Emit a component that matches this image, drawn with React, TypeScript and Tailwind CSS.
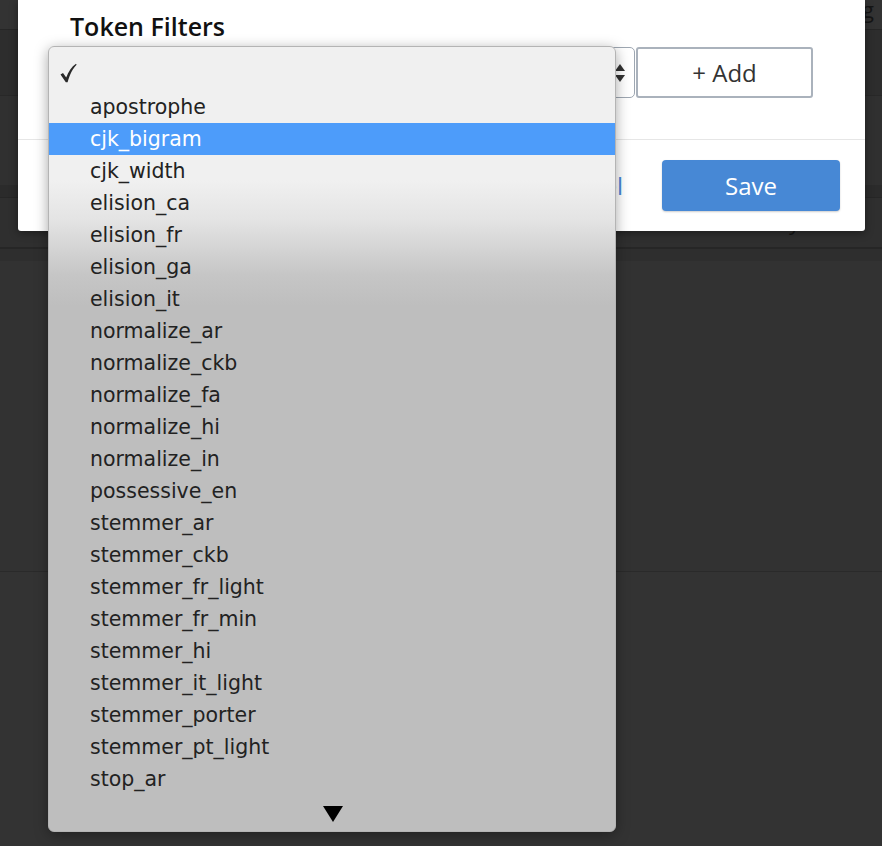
import React from 'react'

const options = [
  'apostrophe',
  'cjk_bigram',
  'cjk_width',
  'elision_ca',
  'elision_fr',
  'elision_ga',
  'elision_it',
  'normalize_ar',
  'normalize_ckb',
  'normalize_fa',
  'normalize_hi',
  'normalize_in',
  'possessive_en',
  'stemmer_ar',
  'stemmer_ckb',
  'stemmer_fr_light',
  'stemmer_fr_min',
  'stemmer_hi',
  'stemmer_it_light',
  'stemmer_porter',
  'stemmer_pt_light',
  'stop_ar',
]

const selected = 'cjk_bigram'

export default function App() {
  return (
    <div className="relative w-[882px] h-[846px] overflow-hidden bg-[#333333] font-['Open_Sans',sans-serif]">
      {/* dimmed page behind the modal */}
      <div className="flex flex-col">
        <div className="h-[29px] bg-[#333333] flex justify-end">
          <span className="text-[22px] leading-[22px] text-[#151515] mr-[8px] -mt-[2px]">Config</span>
        </div>
        <div className="h-[1px] bg-[#262626]" />
        <div className="h-[65px] bg-[#2d2d2d]" />
        <div className="h-[1px] bg-[#282828]" />
        <div className="h-[89px] bg-[#303030]" />
        <div className="h-[12px] bg-[#2b2b2b]" />
        <div className="h-[1px] bg-[#262626]" />
        <div className="h-[49px] bg-[#2f2f2f] flex justify-end">
          <span className="text-[22px] leading-[22px] text-[#151515] mr-[82px] mt-[12px]">Key</span>
        </div>
        <div className="h-[2px] bg-[#262626]" />
        <div className="h-[12px] bg-[#2e2e2e]" />
        <div className="h-[310px] bg-[#323232]" />
        <div className="h-[1px] bg-[#2a2a2a]" />
        <div className="flex-1 h-[275px] bg-[#333333]" />
      </div>

      {/* modal */}
      <div className="absolute left-[18px] top-0 w-[847px] h-[231px] bg-white rounded-b-[3px] shadow-[0_2px_8px_rgba(0,0,0,0.4)] flex flex-col">
        <div className="px-[52px] pt-[10px] pb-[41px] border-b border-[#e6e6e6]">
          <h2 className="text-[25px] leading-[32px] font-semibold text-[#111]">Token Filters</h2>
          <div className="mt-[5px] flex h-[51px]">
            <div className="flex-1 border border-[#9ea7b2] rounded-[5px] flex items-center justify-end pr-[8px]">
              <svg width="12" height="20" viewBox="0 0 12 20">
                <path d="M6 1 L11 8 L1 8 Z" fill="#333" />
                <path d="M6 19 L11 12 L1 12 Z" fill="#333" />
              </svg>
            </div>
            <button className="w-[177px] ml-[1px] border-2 border-[#aab2bc] rounded-[3px] bg-white text-[24px] text-[#333] flex items-center justify-center">
              + Add
            </button>
          </div>
        </div>
        <div className="flex-1 flex items-start justify-end pt-[20px] pr-[25px] gap-[39px]">
          <span className="text-[24px] leading-[51px] text-[#4a89d6]">Cancel</span>
          <button className="w-[178px] h-[51px] rounded-[4px] bg-[#4788d5] text-white text-[24px] shadow-[0_1px_2px_rgba(0,0,0,0.2)]">
            Save
          </button>
        </div>
      </div>

      {/* native select menu */}
      <div className="absolute left-[48px] top-[46px] w-[568px] h-[786px] rounded-[6px] border border-[#b4b4b4] overflow-hidden shadow-[0_3px_14px_rgba(0,0,0,0.35)] bg-[linear-gradient(to_bottom,#f0f0f0_0%,#f0f0f0_17%,#e4e4e4_22%,#c6c6c6_29%,#bebebe_33%,#bebebe_100%)] font-['DejaVu_Sans',sans-serif] text-[20.5px] text-[#222]">
        <div className="pt-[12px] flex flex-col">
          <div className="h-[32px] flex items-center pl-[11px]">
            <svg width="17" height="20" viewBox="0 0 17 20" className="-mt-[4px]">
              <path
                d="M0.5 11.5 L3 10 L6.2 14.5 C8.5 8.5 11.5 3.8 16 0.8 L16.6 1.8 C12.8 5.5 10 11 7.6 19.2 L5.8 19.2 Z"
                fill="#2a2a2a"
              />
            </svg>
          </div>
          {options.map((o) => (
            <div
              key={o}
              className={
                o === selected
                  ? 'h-[32px] flex items-center pl-[41px] bg-[#4d9cfa] text-white'
                  : 'h-[32px] flex items-center pl-[41px]'
              }
            >
              {o}
            </div>
          ))}
          <div className="h-[37px] flex items-center justify-center pl-[1px]">
            <svg width="20" height="16" viewBox="0 0 20 16">
              <path d="M0 0 L20 0 L10 16 Z" fill="#000" />
            </svg>
          </div>
        </div>
      </div>
    </div>
  )
}
